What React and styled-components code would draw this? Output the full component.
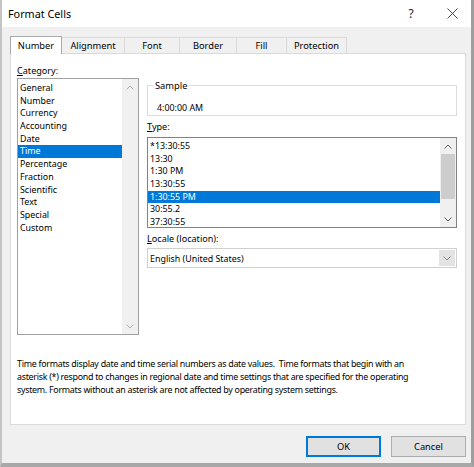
import React from "react"
import styled, {createGlobalStyle} from 'styled-components'

const Global = createGlobalStyle`
  html, body { margin: 0; padding: 0; background: #fff; }
  body { font-family: "Segoe UI", "Noto Sans", "Open Sans", sans-serif; color: #000; }
  * { box-sizing: border-box; }
`

const Window = styled.div`
  width: 474px;
  height: 467px;
  background: #f0f0f0;
  border-left: 2px solid #c4c4c4;
  border-right: 3px solid #9e9e9e;
  border-bottom: 4px solid #a8a8a8;
  display: flex;
  flex-direction: column;
  font-size: 8.9px;
`

const TitleBar = styled.div`
  height: 27px;
  background: #fff;
  display: flex;
  align-items: center;
  padding-left: 6px;
`

const Title = styled.div`
  font-size: 10.8px;
  flex: 1;
`

const TitleButton = styled.div`
  width: ${p => p.$w}px;
  height: 27px;
  display: flex;
  align-items: center;
  justify-content: center;
  font-size: 12px;
  color: #222;
`

const Body = styled.div`
  flex: 1;
  padding: 9px 5px 0 8px;
  display: flex;
  flex-direction: column;
`

const TabRow = styled.div`
  display: flex;
  height: 18px;
  align-items: flex-end;
`

const Tab = styled.div`
  width: ${p => p.$w}px;
  height: ${p => p.$active ? 18 : 17}px;
  display: flex;
  align-items: center;
  justify-content: center;
  background: ${p => p.$active ? '#fff' : '#f0f0f0'};
  border: 1px solid ${p => p.$active ? '#a9a9a9' : '#dadada'};
  border-bottom: ${p => p.$active ? 'none' : '1px solid #dadada'};
  border-left: ${p => p.$first ? undefined : 'none'};
  position: relative;
  z-index: ${p => p.$active ? 1 : 0};
  font-size: 9.3px;
`

const Panel = styled.div`
  height: 372px;
  margin-top: -1px;
  background: #fff;
  border: 1px solid #dadada;
  padding: 10px 8px 0 6px;
  display: flex;
  flex-direction: column;
`

const Columns = styled.div`
  display: grid;
  grid-template-columns: 122px 310px;
  column-gap: 8px;
`

const Column = styled.div`
  display: flex;
  flex-direction: column;
`

const Label = styled.div`
  height: 13px;
  line-height: 13px;
  margin-top: ${p => p.$mt || 0}px;
  font-size: 9.1px;
  u { text-decoration: underline; text-underline-offset: 1px; }
`

const ListBox = styled.div`
  height: ${p => p.$h}px;
  margin-top: ${p => p.$mt || 0}px;
  border: 1px solid ${p => p.$border || '#828282'};
  display: flex;
  background: #fff;
`

const Items = styled.div`
  flex: 1;
  padding-top: ${p => p.$pt || 0}px;
  overflow: hidden;
`

const Item = styled.div`
  height: 12.7px;
  line-height: 12.7px;
  padding-left: 2px;
  white-space: nowrap;
  background: ${p => p.$selected ? '#0078d7' : 'transparent'};
  color: ${p => p.$selected ? '#fff' : '#000'};
`

const ScrollBar = styled.div`
  width: 16px;
  background: #f0f0f0;
  display: flex;
  flex-direction: column;
  align-items: center;
`

const ScrollArrow = styled.div`
  height: 16px;
  width: 16px;
  display: flex;
  align-items: center;
  justify-content: center;
`

const ScrollTrack = styled.div`
  flex: 1;
  width: 16px;
  display: flex;
  flex-direction: column;
`

const Thumb = styled.div`
  margin-left: 1px;
  width: 14px;
  height: ${p => p.$h}px;
  background: #cdcdcd;
`

const Fieldset = styled.fieldset`
  margin: 15px 0 0 0;
  padding: 0 8px 4px 8px;
  border: 1px solid #dcdcdc;
  height: 37px;
  min-width: 0;
`

const Legend = styled.legend`
  padding: 0 2px;
  margin-left: -3px;
  line-height: 13px;
  font-size: 9.3px;
`

const SampleValue = styled.div`
  padding-top: 9px;
  line-height: 13px;
  padding-left: 1px;
`

const Select = styled.div`
  height: 20px;
  margin-top: 3px;
  border: 1px solid #d0d0d0;
  display: flex;
  align-items: stretch;
`

const SelectText = styled.div`
  flex: 1;
  line-height: 19px;
  padding-left: 2px;
`

const SelectArrow = styled.div`
  width: 16px;
  margin: 1px;
  background: #e3e3e3;
  display: flex;
  align-items: center;
  justify-content: center;
`

const Description = styled.div`
  margin-top: 22px;
  line-height: 13px;
  white-space: nowrap;
  letter-spacing: -0.28px;
`

const Footer = styled.div`
  display: flex;
  justify-content: flex-end;
  gap: 10px;
  padding-top: 11px;
`

const Button = styled.div`
  width: 75px;
  height: 21px;
  display: flex;
  align-items: center;
  justify-content: center;
  background: #e1e1e1;
  border: ${p => p.$default ? '2px solid #0078d7' : '1px solid #adadad'};
  font-size: 9.3px;
`

const Chevron = ({up, color = '#606060'}) => (
    <svg width="8" height="5" viewBox="0 0 8 5">
        <polyline points={up ? "0.5,4.5 4,1 7.5,4.5" : "0.5,0.5 4,4 7.5,0.5"}
                  fill="none" stroke={color} strokeWidth="1"/>
    </svg>
)

const tabs = [
    ['Number', 52], ['Alignment', 63], ['Font', 55], ['Border', 57], ['Fill', 50], ['Protection', 60]
]

const categories = ['General', 'Number', 'Currency', 'Accounting', 'Date', 'Time', 'Percentage',
    'Fraction', 'Scientific', 'Text', 'Special', 'Custom']

const types = ['*13:30:55', '13:30', '1:30 PM', '13:30:55', '1:30:55 PM', '30:55.2', '37:30:55']

export default function App() {
    return (
        <>
            <Global/>
            <Window>
                <TitleBar>
                    <Title>Format Cells</Title>
                    <TitleButton $w={36}>?</TitleButton>
                    <div style={{width: 4}}/>
                    <TitleButton $w={38}>
                        <svg width="11" height="11" viewBox="0 0 11 11">
                            <path d="M0.5 0.5 L10.5 10.5 M10.5 0.5 L0.5 10.5" stroke="#333" strokeWidth="0.9"/>
                        </svg>
                    </TitleButton>
                </TitleBar>
                <Body>
                    <TabRow>
                        {tabs.map(([name, w], i) => (
                            <Tab key={name} $w={w} $active={i === 0} $first={i === 0}>{name}</Tab>
                        ))}
                    </TabRow>
                    <Panel>
                        <Columns>
                            <Column>
                                <Label><u>C</u>ategory:</Label>
                                <ListBox $h={257} $mt={1} $border="#a0a0a0">
                                    <Items $pt={3}>
                                        {categories.map(c => (
                                            <Item key={c} $selected={c === 'Time'}>{c}</Item>
                                        ))}
                                    </Items>
                                    <ScrollBar>
                                        <ScrollArrow><Chevron up color="#b0b0b0"/></ScrollArrow>
                                        <ScrollTrack/>
                                        <ScrollArrow><Chevron color="#b0b0b0"/></ScrollArrow>
                                    </ScrollBar>
                                </ListBox>
                            </Column>
                            <Column>
                                <Fieldset>
                                    <Legend>Sample</Legend>
                                    <SampleValue>4:00:00 AM</SampleValue>
                                </Fieldset>
                                <Label $mt={4}><u>T</u>ype:</Label>
                                <ListBox $h={91} $mt={4}>
                                    <Items $pt={2}>
                                        {types.map((t, i) => (
                                            <Item key={i} $selected={i === 4}>{t}</Item>
                                        ))}
                                    </Items>
                                    <ScrollBar>
                                        <ScrollArrow><Chevron up/></ScrollArrow>
                                        <ScrollTrack><Thumb $h={45}/></ScrollTrack>
                                        <ScrollArrow><Chevron/></ScrollArrow>
                                    </ScrollBar>
                                </ListBox>
                                <Label $mt={4}><u>L</u>ocale (location):</Label>
                                <Select>
                                    <SelectText>English (United States)</SelectText>
                                    <SelectArrow><Chevron color="#888"/></SelectArrow>
                                </Select>
                            </Column>
                        </Columns>
                        <Description>
                            Time formats display date and time serial numbers as date values.&nbsp; Time formats that begin with an<br/>
                            asterisk (*) respond to changes in regional date and time settings that are specified for the operating<br/>
                            system. Formats without an asterisk are not affected by operating system settings.
                        </Description>
                    </Panel>
                    <Footer>
                        <Button $default>OK</Button>
                        <Button>Cancel</Button>
                    </Footer>
                </Body>
            </Window>
        </>
    )
}
